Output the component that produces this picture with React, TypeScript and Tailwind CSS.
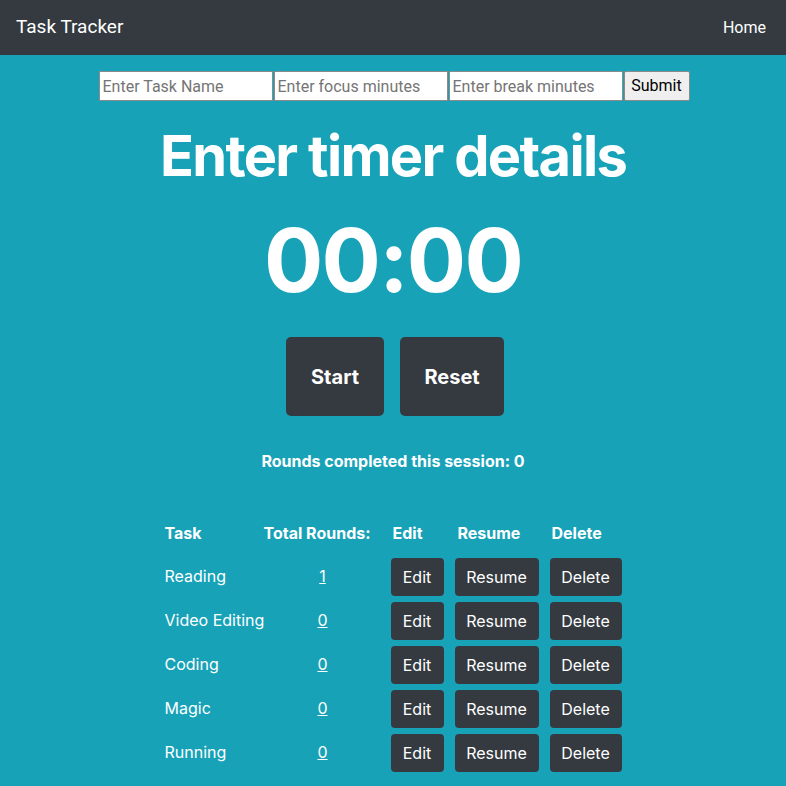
import React from 'react'

const tasks = [
  { name: 'Reading', rounds: 1 },
  { name: 'Video Editing', rounds: 0 },
  { name: 'Coding', rounds: 0 },
  { name: 'Magic', rounds: 0 },
  { name: 'Running', rounds: 0 },
]

const cols = 'grid grid-cols-[99px_127px_64px_95px_72px] items-center'

function SmallButton({ label, width }: { label: string; width: string }) {
  return (
    <button
      type="button"
      className={`h-[38px] ${width} rounded-[4px] bg-[#343a40] text-white text-[16px]`}
    >
      {label}
    </button>
  )
}

export default function App() {
  return (
    <div className="min-h-[786px] bg-[#17a2b8] text-white font-['Inter',sans-serif]">
      <nav className="h-[55px] bg-[#343a40] flex items-center justify-between px-4 font-['Roboto',sans-serif]">
        <span className="text-[19px]">Task Tracker</span>
        <a href="#" className="text-[16px] pr-1">Home</a>
      </nav>

      <form className="flex justify-center mt-4 pl-[2px] font-['Roboto',sans-serif] text-[16px]">
        <input
          placeholder="Enter Task Name"
          className="w-[174px] h-[30px] bg-white border border-[#8a8a8a] px-[3px] text-black placeholder:text-[#757575] outline-none"
        />
        <input
          placeholder="Enter focus minutes"
          className="w-[174px] h-[30px] ml-[1px] bg-white border border-[#8a8a8a] px-[3px] text-black placeholder:text-[#757575] outline-none"
        />
        <input
          placeholder="Enter break minutes"
          className="w-[174px] h-[30px] ml-[1px] bg-white border border-[#8a8a8a] px-[3px] text-black placeholder:text-[#757575] outline-none"
        />
        <button
          type="button"
          className="w-[66px] h-[30px] ml-[1px] bg-[#efefef] border border-[#8a8a8a] rounded-[2px] text-black"
        >
          Submit
        </button>
      </form>

      <h1 className="mt-[22px] text-center text-[56px] leading-[67px] font-bold tracking-[-0.03em]">
        Enter timer details
      </h1>
      <div className="mt-[17px] text-center text-[88px] leading-[106px] font-bold tracking-[-0.02em]">
        00:00
      </div>

      <div className="mt-[24px] flex justify-center gap-4 pl-[4px]">
        <button type="button" className="h-[79px] w-[98px] rounded-[5px] bg-[#343a40] text-[20px] font-bold">
          Start
        </button>
        <button type="button" className="h-[79px] w-[104px] rounded-[5px] bg-[#343a40] text-[20px] font-bold">
          Reset
        </button>
      </div>

      <p className="mt-[35px] text-center text-[16px] leading-[20px] font-bold">
        Rounds completed this session: 0
      </p>

      <div className="mt-[40px] flex justify-center">
        <div className="text-[16px]">
          <div className={`${cols} h-[44px] font-bold`}>
            <span>Task</span>
            <span className="whitespace-nowrap">Total Rounds:</span>
            <span className="pl-[2px]">Edit</span>
            <span className="pl-[3px]">Resume</span>
            <span className="pl-[2px]">Delete</span>
          </div>
          {tasks.map((task) => (
            <div key={task.name} className={`${cols} h-[44px]`}>
              <span className="-mt-[2px] whitespace-nowrap">{task.name}</span>
              <span className="-mt-[2px] w-[118px] text-center">
                <a href="#" className="underline">{task.rounds}</a>
              </span>
              <SmallButton label="Edit" width="w-[53px]" />
              <SmallButton label="Resume" width="w-[84px]" />
              <SmallButton label="Delete" width="w-[72px]" />
            </div>
          ))}
        </div>
      </div>
    </div>
  )
}
